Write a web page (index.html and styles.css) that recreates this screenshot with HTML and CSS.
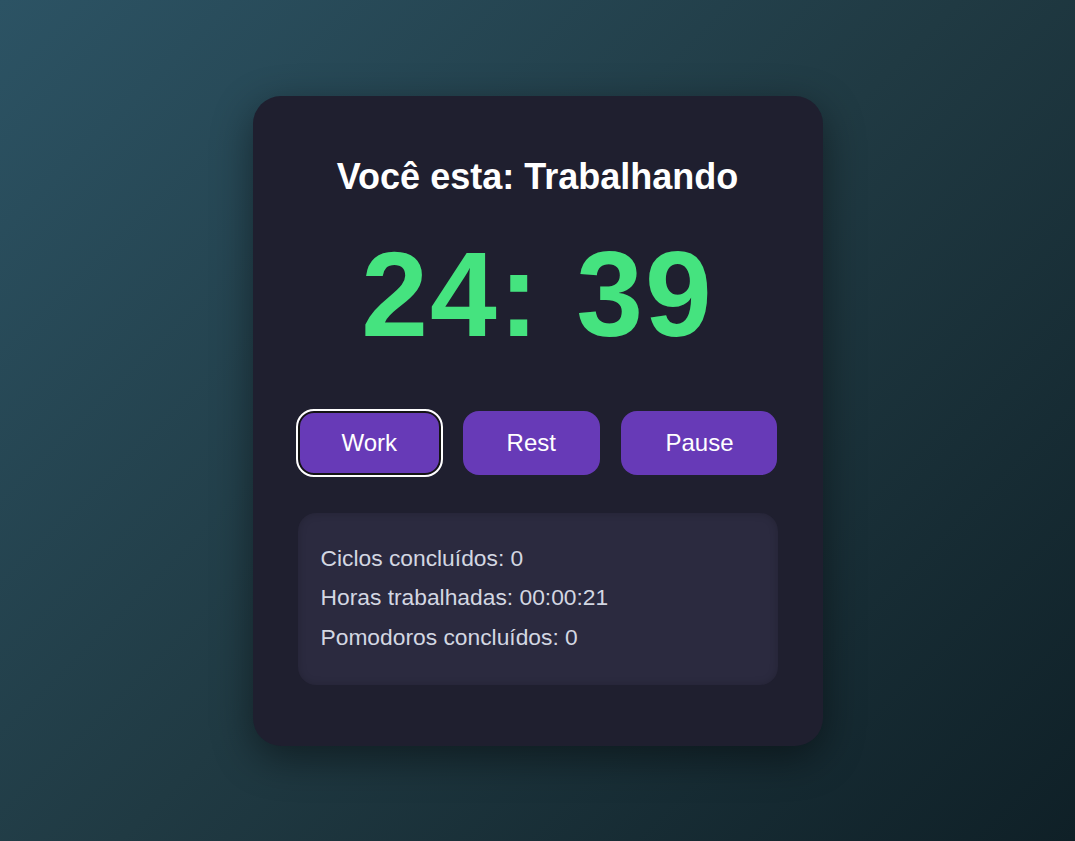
FILE: index.html
```html
<!DOCTYPE html>
<html lang="pt-BR">
<head>
<meta charset="UTF-8">
<title>Pomodoro</title>
<link rel="stylesheet" href="styles.css">
</head>
<body>
  <main class="card">
    <h1 class="status">Você esta: Trabalhando</h1>
    <div class="timer">24: 39</div>
    <div class="controls">
      <button class="btn btn-focus">Work</button>
      <button class="btn">Rest</button>
      <button class="btn">Pause</button>
    </div>
    <section class="stats">
      <p class="stat">Ciclos concluídos: 0</p>
      <p class="stat">Horas trabalhadas: 00:00:21</p>
      <p class="stat">Pomodoros concluídos: 0</p>
    </section>
  </main>
</body>
</html>
```

FILE: styles.css
```css
* { box-sizing: border-box; }

html, body {
  margin: 0;
  padding: 0;
}

body {
  min-height: 100vh;
  display: flex;
  align-items: center;
  justify-content: center;
  font-family: "Liberation Sans", Arial, sans-serif;
  background: linear-gradient(135deg, #2c5364 0%, #203a43 50%, #0f2027 100%);
}

.card {
  width: 570px;
  height: 650px;
  padding: 60px 45px 45px;
  background: #1f1f2f;
  border-radius: 28px;
  box-shadow: 0 12px 40px rgba(0, 0, 0, 0.45);
  display: flex;
  flex-direction: column;
}

.status {
  margin: 0;
  text-align: center;
  color: #ffffff;
  font-size: 36px;
  font-weight: 700;
  line-height: 41px;
}

.timer {
  margin-top: 26px;
  text-align: center;
  color: #45e37f;
  font-size: 120px;
  font-weight: 700;
  line-height: 143px;
  letter-spacing: 2px;
}

.controls {
  margin-top: 45px;
  display: flex;
  justify-content: space-between;
}

.btn {
  font-family: "Liberation Sans", Arial, sans-serif;
  font-size: 24px;
  line-height: 28px;
  color: #ffffff;
  background: #673ab7;
  border: none;
  border-radius: 16px;
  padding: 18px 44px;
  cursor: pointer;
}

.btn-focus {
  outline: 2px solid #ffffff;
  outline-offset: 0;
  box-shadow: inset 0 0 0 2px #141414;
}

.stats {
  margin-top: 38px;
  background: #2b2a3f;
  border-radius: 18px;
  padding: 26px 23px 28px;
  box-shadow: inset 0 0 8px rgba(0, 0, 0, 0.18);
}

.stat {
  margin: 0;
  color: #d3d7e2;
  font-size: 22.8px;
  line-height: 39.5px;
}
```
